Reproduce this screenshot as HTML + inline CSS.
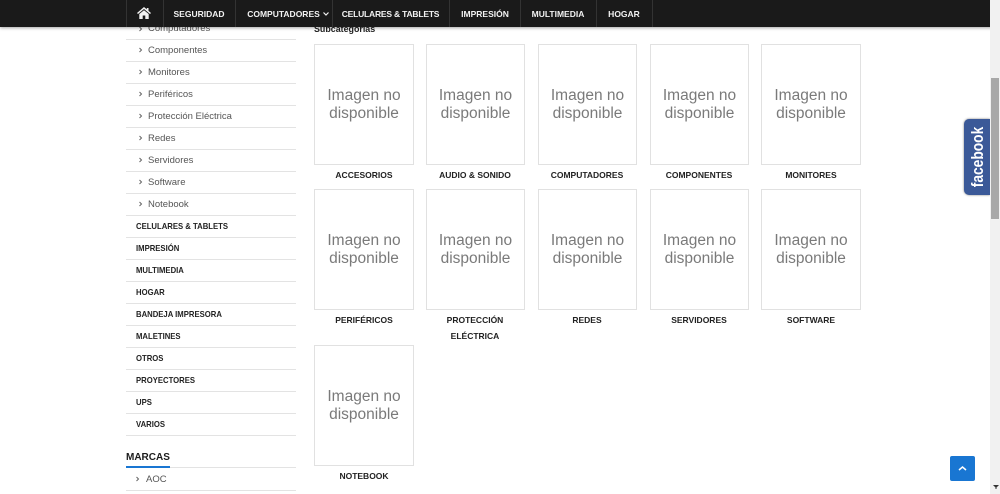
<!DOCTYPE html>
<html lang="es">
<head>
<meta charset="utf-8">
<title>Subcategorías</title>
<style>
html,body{margin:0;padding:0;background:#fff;}
body{width:1000px;height:494px;overflow:hidden;position:relative;font-family:"Liberation Sans",sans-serif;}
.abs{position:absolute;white-space:nowrap;}
#nav{position:absolute;left:0;top:0;width:1000px;height:27px;background:#1a1a1a;box-shadow:0 1px 3px rgba(0,0,0,.35);z-index:5;}
#nav .sep{position:absolute;top:0;width:1px;height:27px;background:#333;}
#nav .t{position:absolute;top:0;line-height:28px;font-size:8.5px;font-weight:bold;color:#f2f2f2;white-space:nowrap;transform:translateX(-50%);}
.line{position:absolute;left:126px;width:170px;height:1px;background:#e3e3e3;}
.sub{position:absolute;left:148px;font-size:9.5px;line-height:14px;color:#555;white-space:nowrap;}
.chev{position:absolute;left:138px;width:6px;height:14px;}
.cat{position:absolute;left:136px;font-size:8.3px;line-height:14px;font-weight:bold;color:#222;white-space:nowrap;transform:scaleX(.93);transform-origin:0 50%;}
.card{position:absolute;width:98px;height:119px;border:1px solid #e1e1e1;background:#fff;text-align:center;color:#7a7a7a;font-size:15.5px;line-height:18px;}
.card.n{width:97px;}
.card span{display:block;position:relative;top:42px;}
.lab{position:absolute;width:110px;text-align:center;font-size:8.5px;font-weight:bold;line-height:15.5px;color:#222;}
</style>
</head>
<body>

<div id="nav">
  <div class="sep" style="left:126px"></div>
  <div class="sep" style="left:163px"></div>
  <div class="sep" style="left:235px"></div>
  <div class="sep" style="left:332px"></div>
  <div class="sep" style="left:449px"></div>
  <div class="sep" style="left:520px"></div>
  <div class="sep" style="left:596px"></div>
  <div class="sep" style="left:652px"></div>
  <svg style="position:absolute;left:137px;top:7px" width="14" height="12" viewBox="0 0 14 12"><path d="M7 0 L0 6 L1 7 L7 2 L13 7 L14 6 L11.500 3.900 V1 H9.800 V2.400 Z M2.300 7 V12 H5.700 V8.500 H8.300 V12 H11.700 V7 L7 3.200 Z" fill="#f2f2f2"/></svg>
  <div class="t" style="left:199px">SEGURIDAD</div>
  <div class="t" style="left:283.500px">COMPUTADORES</div>
  <svg style="position:absolute;left:323px;top:12px" width="6" height="4" viewBox="0 0 6 4"><path d="M.5 .5 L3 3 L5.500 .5" fill="none" stroke="#f2f2f2" stroke-width="1.200"/></svg>
  <div class="t" style="left:390.500px;letter-spacing:-.2px">CELULARES &amp; TABLETS</div>
  <div class="t" style="left:485px">IMPRESIÓN</div>
  <div class="t" style="left:558px">MULTIMEDIA</div>
  <div class="t" style="left:624px">HOGAR</div>
</div>

<!-- Sidebar -->
<svg class="chev" style="top:22px" viewBox="0 0 6 14"><path d="M1.500 5 L3.500 7 L1.500 9" fill="none" stroke="#666" stroke-width="1"/></svg>
<div class="sub" style="top:22px">Computadores</div>
<div class="line" style="top:39px"></div>
<svg class="chev" style="top:43px" viewBox="0 0 6 14"><path d="M1.500 5 L3.500 7 L1.500 9" fill="none" stroke="#666" stroke-width="1"/></svg>
<div class="sub" style="top:44px">Componentes</div>
<div class="line" style="top:61px"></div>
<svg class="chev" style="top:65px" viewBox="0 0 6 14"><path d="M1.500 5 L3.500 7 L1.500 9" fill="none" stroke="#666" stroke-width="1"/></svg>
<div class="sub" style="top:66px">Monitores</div>
<div class="line" style="top:83px"></div>
<svg class="chev" style="top:87px" viewBox="0 0 6 14"><path d="M1.500 5 L3.500 7 L1.500 9" fill="none" stroke="#666" stroke-width="1"/></svg>
<div class="sub" style="top:88px">Periféricos</div>
<div class="line" style="top:105px"></div>
<svg class="chev" style="top:109px" viewBox="0 0 6 14"><path d="M1.500 5 L3.500 7 L1.500 9" fill="none" stroke="#666" stroke-width="1"/></svg>
<div class="sub" style="top:110px">Protección Eléctrica</div>
<div class="line" style="top:127px"></div>
<svg class="chev" style="top:131px" viewBox="0 0 6 14"><path d="M1.500 5 L3.500 7 L1.500 9" fill="none" stroke="#666" stroke-width="1"/></svg>
<div class="sub" style="top:132px">Redes</div>
<div class="line" style="top:149px"></div>
<svg class="chev" style="top:153px" viewBox="0 0 6 14"><path d="M1.500 5 L3.500 7 L1.500 9" fill="none" stroke="#666" stroke-width="1"/></svg>
<div class="sub" style="top:154px">Servidores</div>
<div class="line" style="top:171px"></div>
<svg class="chev" style="top:175px" viewBox="0 0 6 14"><path d="M1.500 5 L3.500 7 L1.500 9" fill="none" stroke="#666" stroke-width="1"/></svg>
<div class="sub" style="top:176px">Software</div>
<div class="line" style="top:193px"></div>
<svg class="chev" style="top:197px" viewBox="0 0 6 14"><path d="M1.500 5 L3.500 7 L1.500 9" fill="none" stroke="#666" stroke-width="1"/></svg>
<div class="sub" style="top:198px">Notebook</div>
<div class="line" style="top:215px"></div>

<div class="cat" style="top:219px">CELULARES &amp; TABLETS</div>
<div class="line" style="top:237px"></div>
<div class="cat" style="top:241px">IMPRESIÓN</div>
<div class="line" style="top:259px"></div>
<div class="cat" style="top:263px">MULTIMEDIA</div>
<div class="line" style="top:281px"></div>
<div class="cat" style="top:285px">HOGAR</div>
<div class="line" style="top:303px"></div>
<div class="cat" style="top:307px">BANDEJA IMPRESORA</div>
<div class="line" style="top:325px"></div>
<div class="cat" style="top:329px">MALETINES</div>
<div class="line" style="top:347px"></div>
<div class="cat" style="top:351px">OTROS</div>
<div class="line" style="top:369px"></div>
<div class="cat" style="top:373px">PROYECTORES</div>
<div class="line" style="top:391px"></div>
<div class="cat" style="top:395px">UPS</div>
<div class="line" style="top:413px"></div>
<div class="cat" style="top:417px">VARIOS</div>
<div class="line" style="top:435px"></div>

<div class="abs" style="left:126px;top:450px;font-size:10px;line-height:15px;font-weight:bold;color:#1c1c1c">MARCAS</div>
<div class="line" style="top:467px;height:1px"></div>
<div class="abs" style="left:126px;top:466px;width:44px;height:2px;background:#1976d2"></div>
<svg class="chev" style="left:135px;top:472px" viewBox="0 0 6 14"><path d="M1.500 5 L3.500 7 L1.500 9" fill="none" stroke="#666" stroke-width="1"/></svg>
<div class="sub" style="left:146px;top:473px">AOC</div>
<div class="line" style="top:490px"></div>

<!-- Main -->
<div class="abs" style="left:314px;top:22px;font-size:8.900px;line-height:15px;font-weight:bold;color:#222">Subcategorías</div>

<div class="card" style="left:314px;top:44px"><span>Imagen no<br>disponible</span></div>
<div class="card n" style="left:426px;top:44px"><span>Imagen no<br>disponible</span></div>
<div class="card n" style="left:538px;top:44px"><span>Imagen no<br>disponible</span></div>
<div class="card n" style="left:650px;top:44px"><span>Imagen no<br>disponible</span></div>
<div class="card" style="left:761px;top:44px"><span>Imagen no<br>disponible</span></div>

<div class="lab" style="left:309px;top:168px">ACCESORIOS</div>
<div class="lab" style="left:420px;top:168px">AUDIO &amp; SONIDO</div>
<div class="lab" style="left:532px;top:168px">COMPUTADORES</div>
<div class="lab" style="left:644px;top:168px">COMPONENTES</div>
<div class="lab" style="left:756px;top:168px">MONITORES</div>

<div class="card" style="left:314px;top:189px"><span>Imagen no<br>disponible</span></div>
<div class="card n" style="left:426px;top:189px"><span>Imagen no<br>disponible</span></div>
<div class="card n" style="left:538px;top:189px"><span>Imagen no<br>disponible</span></div>
<div class="card n" style="left:650px;top:189px"><span>Imagen no<br>disponible</span></div>
<div class="card" style="left:761px;top:189px"><span>Imagen no<br>disponible</span></div>

<div class="lab" style="left:309px;top:313px">PERIFÉRICOS</div>
<div class="lab" style="left:420px;top:313px">PROTECCIÓN<br>ELÉCTRICA</div>
<div class="lab" style="left:532px;top:313px">REDES</div>
<div class="lab" style="left:644px;top:313px">SERVIDORES</div>
<div class="lab" style="left:756px;top:313px">SOFTWARE</div>

<div class="card" style="left:314px;top:345px"><span>Imagen no<br>disponible</span></div>
<div class="lab" style="left:309px;top:469px">NOTEBOOK</div>

<!-- Facebook tab -->
<div style="position:absolute;left:964px;top:119px;width:26px;height:76px;background:#3b5998;border-radius:5px 0 0 5px;box-shadow:0 0 2px rgba(0,0,0,.5);z-index:4"></div>
<div style="position:absolute;left:977.500px;top:157px;transform:translate(-50%,-50%) rotate(-90deg) scale(.81,1);color:#fff;font-size:17px;font-weight:bold;line-height:20px;white-space:nowrap;z-index:4">facebook</div>

<!-- Back to top -->
<div style="position:absolute;left:950px;top:456px;width:25px;height:25px;background:#1976d2;border-radius:2px;z-index:4">
  <svg style="position:absolute;left:8px;top:9px" width="9" height="7" viewBox="0 0 9 7"><path d="M1 5 L4.500 2 L8 5" fill="none" stroke="#fff" stroke-width="1.500"/></svg>
</div>

<!-- Scrollbar -->
<div style="position:absolute;left:990px;top:0;width:10px;height:494px;background:#f1f1f1;z-index:6"></div>
<div style="position:absolute;left:991px;top:78px;width:8px;height:141px;background:#a8a8a8;z-index:7"></div>
<svg style="position:absolute;left:993px;top:484px;z-index:7" width="6" height="6" viewBox="0 0 6 6"><path d="M0 1 H6 L3.500 3.500 V5 H2.500 V3.500 Z" fill="#333"/></svg>

</body>
</html>
